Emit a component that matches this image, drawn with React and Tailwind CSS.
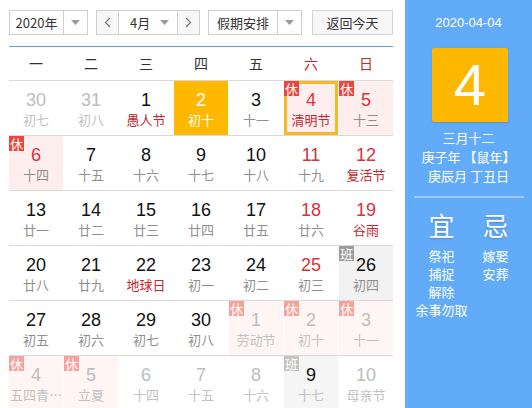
import React from 'react';

const rows = [
  [
    { n: '30', l: '初七', other: true },
    { n: '31', l: '初八', other: true },
    { n: '1', l: '愚人节', fest: true },
    { n: '2', l: '初十', selected: true },
    { n: '3', l: '十一' },
    { n: '4', l: '清明节', red: true, fest: true, rest: true, today: true },
    { n: '5', l: '十三', red: true, rest: true },
  ],
  [
    { n: '6', l: '十四', red: true, rest: true },
    { n: '7', l: '十五' },
    { n: '8', l: '十六' },
    { n: '9', l: '十七' },
    { n: '10', l: '十八' },
    { n: '11', l: '十九', red: true },
    { n: '12', l: '复活节', red: true, fest: true },
  ],
  [
    { n: '13', l: '廿一' },
    { n: '14', l: '廿二' },
    { n: '15', l: '廿三' },
    { n: '16', l: '廿四' },
    { n: '17', l: '廿五' },
    { n: '18', l: '廿六', red: true },
    { n: '19', l: '谷雨', red: true, fest: true },
  ],
  [
    { n: '20', l: '廿八' },
    { n: '21', l: '廿九' },
    { n: '22', l: '地球日', fest: true },
    { n: '23', l: '初一' },
    { n: '24', l: '初二' },
    { n: '25', l: '初三', red: true },
    { n: '26', l: '初四', work: true },
  ],
  [
    { n: '27', l: '初五' },
    { n: '28', l: '初六' },
    { n: '29', l: '初七' },
    { n: '30', l: '初八' },
    { n: '1', l: '劳动节', other: true, rest: true },
    { n: '2', l: '初十', other: true, rest: true },
    { n: '3', l: '十一', other: true, rest: true },
  ],
  [
    { n: '4', l: '五四青…', other: true, rest: true },
    { n: '5', l: '立夏', other: true, rest: true },
    { n: '6', l: '十四', other: true },
    { n: '7', l: '十五', other: true },
    { n: '8', l: '十六', other: true },
    { n: '9', l: '十七', other: true, work: true, dark: true },
    { n: '10', l: '母亲节', other: true },
  ],
];

const weekdays = ['一', '二', '三', '四', '五', '六', '日'];

function Caret() {
  return (
    <svg width="9" height="5" viewBox="0 0 9 5" className="fill-[#9a9a9a]">
      <path d="M0 0h9L4.5 5z" />
    </svg>
  );
}

function Cell({ d }) {
  let bg = 'bg-white';
  if (d.rest) bg = d.other ? 'bg-[#fff5f5]' : 'bg-[#ffeeee]';
  if (d.work) bg = d.other ? 'bg-[#f5f5f5]' : 'bg-[#f2f2f2]';
  if (d.selected) bg = 'bg-[#ffb800]';

  let numColor = 'text-[#111]';
  if (d.red) numColor = 'text-[#d8323a]';
  if (d.other) numColor = 'text-[#bdbdbd]';
  if (d.dark) numColor = 'text-[#111]';
  if (d.selected) numColor = 'text-white';

  let lunColor = 'text-[#8f8f8f]';
  if (d.fest) lunColor = 'text-[#c8262e]';
  if (d.other) lunColor = 'text-[#c2c2c2]';
  if (d.selected) lunColor = 'text-white';

  return (
    <div className={`relative flex h-[54px] w-[54px] flex-col items-center ${bg}`}>
      {d.today && <div className="absolute inset-0 border-[3px] border-[#f6b923]" />}
      {d.rest && (
        <span className={`absolute left-0 top-0 z-10 flex h-[15px] w-[15px] items-center justify-center text-[13px] leading-none text-white ${d.other ? 'bg-[#f5a29d]' : 'bg-[#e8463e]'}`}>休</span>
      )}
      {d.work && (
        <span className={`absolute left-0 top-0 z-10 flex h-[15px] w-[15px] items-center justify-center text-[13px] leading-none text-white ${d.other ? 'bg-[#c4c4c4]' : 'bg-[#9c9c9c]'}`}>班</span>
      )}
      <span className={`mt-[8px] font-['Liberation_Sans',sans-serif] text-[18px] leading-[22px] ${numColor}`}>{d.n}</span>
      <span className={`whitespace-nowrap text-center text-[13px] leading-[18px] ${lunColor}`}>{d.l}</span>
    </div>
  );
}

export default function App() {
  return (
    <div className="flex h-[408px] w-[532px] overflow-hidden bg-white font-['Noto_Sans_CJK_SC','Liberation_Sans',sans-serif]">
      <div className="w-[405px] pl-[9px] pt-[10px]">
        <div className="flex h-[25px] items-stretch text-[13px] text-[#333]">
          <div className="flex w-[79px] border border-[#cfcfcf]">
            <div className="flex flex-1 items-center justify-center">2020年</div>
            <div className="flex w-[24px] items-center justify-center border-l border-[#cfcfcf]"><Caret /></div>
          </div>
          <div className="ml-[8px] flex w-[104px] border border-[#cfcfcf]">
            <div className="flex w-[22px] items-center justify-center border-r border-[#cfcfcf] bg-[#f7f7f7] text-[#777]">
              <svg width="7" height="11" viewBox="0 0 7 11" fill="none" stroke="#777" strokeWidth="1.2"><path d="M6 1L1.5 5.5 6 10" /></svg>
            </div>
            <div className="flex flex-1 items-center pl-[11px]">
              <span>4月</span>
              <span className="ml-auto mr-[8px] flex"><Caret /></span>
            </div>
            <div className="flex w-[22px] items-center justify-center border-l border-[#cfcfcf] bg-[#f7f7f7]">
              <svg width="7" height="11" viewBox="0 0 7 11" fill="none" stroke="#777" strokeWidth="1.2"><path d="M1 1l4.5 4.5L1 10" /></svg>
            </div>
          </div>
          <div className="ml-[8px] flex w-[94px] border border-[#cfcfcf]">
            <div className="flex flex-1 items-center justify-center">假期安排</div>
            <div className="flex w-[24px] items-center justify-center border-l border-[#cfcfcf]"><Caret /></div>
          </div>
          <div className="ml-[10px] flex w-[81px] items-center justify-center border border-[#d4d4d4] bg-[#f7f7f7]">返回今天</div>
        </div>
        <div className="mt-[11px] h-px w-[384px] bg-[#5aa1e3]" />
        <div className="grid h-[33px] w-[384px] grid-cols-7 gap-x-px text-[14px]">
          {weekdays.map((w, i) => (
            <div key={w} className={`flex items-center justify-center ${i >= 5 ? 'text-[#c8262e]' : 'text-[#333]'}`}>{w}</div>
          ))}
        </div>
        {rows.map((r, i) => (
          <div key={i} className="grid w-[384px] grid-cols-[repeat(7,54px)] gap-x-px border-t border-[#d9d9d9]">
            {r.map((d, j) => <Cell key={j} d={d} />)}
          </div>
        ))}
      </div>
      <div className="flex w-[127px] flex-col items-center bg-[#62abf8] text-white">
        <div className="mt-[14px] font-['Liberation_Sans',sans-serif] text-[13px] leading-[18px]">2020-04-04</div>
        <div className="mt-[16px] ml-[3px] flex h-[74px] w-[76px] items-center justify-center rounded-[2px] bg-[#ffb800] font-['Liberation_Sans',sans-serif] text-[58px] leading-none shadow-[0_1px_2px_rgba(0,0,0,0.15)]">4</div>
        <div className="mt-[6px] text-[13px] leading-[19px]">三月十二</div>
        <div className="whitespace-pre text-[13px] leading-[19px]">庚子年 【鼠年】</div>
        <div className="text-[13px] leading-[19px]">庚辰月 丁丑日</div>
        <div className="mt-[11px] h-[2px] w-[110px] bg-[#9ccbfb]" />
        <div className="mt-[12px] flex w-[108px] text-[13px] leading-[18px]">
          <div className="flex w-[54px] flex-col items-center">
            <div className="mb-[7px] text-[26px] leading-[30px] [text-shadow:0_1px_2px_rgba(0,0,0,0.2)]">宜</div>
            <div>祭祀</div>
            <div>捕捉</div>
            <div>解除</div>
            <div className="whitespace-nowrap">余事勿取</div>
          </div>
          <div className="flex w-[54px] flex-col items-center">
            <div className="mb-[7px] text-[26px] leading-[30px] [text-shadow:0_1px_2px_rgba(0,0,0,0.2)]">忌</div>
            <div>嫁娶</div>
            <div>安葬</div>
          </div>
        </div>
      </div>
    </div>
  );
}
